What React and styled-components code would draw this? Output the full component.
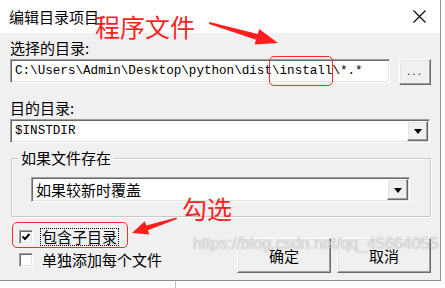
import React from 'react';
import styled, { createGlobalStyle, css } from 'styled-components';

const GlobalStyle = createGlobalStyle`
  html, body {
    margin: 0;
    background: #ffffff;
  }
  body {
    font-family: "Noto Sans CJK SC", "Noto Sans", sans-serif;
    color: #000;
  }
`;

const sunken = css`
  border: 1px solid;
  border-color: #a0a0a0 #ffffff #ffffff #a0a0a0;
  box-shadow: inset 1px 1px #696969, inset -1px -1px #e3e3e3;
`;

const raised = css`
  border: 1px solid;
  border-color: #ffffff #696969 #696969 #ffffff;
  box-shadow: inset -1px -1px #a0a0a0, inset 1px 1px #e3e3e3;
  background: #f0f0f0;
`;

const Stage = styled.div`
  position: relative;
  width: 445px;
  height: 288px;
  overflow: hidden;
  background: #ffffff;
`;

const Window = styled.div`
  width: 441px;
  height: 281px;
  box-sizing: border-box;
  border-right: 1px solid #8f8f8f;
  border-bottom: 1px solid #8f8f8f;
  display: flex;
  flex-direction: column;
`;

const TitleBar = styled.div`
  height: 33px;
  flex: none;
  background: #ffffff;
  display: flex;
  align-items: center;
  justify-content: space-between;
  padding: 0 14px 0 9px;
  font-size: 15px;
`;

const Body = styled.div`
  flex: 1;
  background: #f0f0f0;
  padding: 6px 9px 0 10px;
  font-size: 15px;
`;

const Label = styled.div`
  height: 18px;
  line-height: 18px;
  margin-top: ${p => p.$top || 0}px;
`;

const PathRow = styled.div`
  display: flex;
  align-items: flex-start;
  gap: 9px;
  margin-top: 2px;
`;

const TextBox = styled.div`
  ${sunken};
  box-sizing: border-box;
  width: ${p => p.$w}px;
  height: 24px;
  background: #ffffff;
  display: flex;
  align-items: center;
  padding-left: 4px;
  font-family: "Liberation Mono", "DejaVu Sans Mono", monospace;
  font-size: 12.6px;
  white-space: nowrap;
`;

const BrowseButton = styled.div`
  ${raised};
  box-sizing: border-box;
  width: 32px;
  height: 26px;
  display: flex;
  align-items: center;
  justify-content: center;
  font-family: "Liberation Sans", sans-serif;
  font-size: 12px;
  letter-spacing: 2px;
  color: #333;
  padding-bottom: 2px;
`;

const Combo = styled.div`
  ${sunken};
  box-sizing: border-box;
  width: ${p => p.$w}px;
  height: ${p => p.$h || 24}px;
  margin: ${p => p.$margin || '2px 0 0 0'};
  background: #ffffff;
  display: flex;
  align-items: stretch;
  padding: 1px;
`;

const ComboText = styled.div`
  flex: 1;
  display: flex;
  align-items: center;
  padding-left: 3px;
  white-space: nowrap;
  font-family: ${p => (p.$mono ? '"Liberation Mono", monospace' : '"Noto Sans CJK SC", sans-serif')};
  font-size: ${p => (p.$mono ? '12.6px' : '15px')};
`;

const DropButton = styled.div`
  ${raised};
  box-sizing: border-box;
  width: 21px;
  display: flex;
  align-items: center;
  justify-content: center;
`;

const Arrow = styled.div`
  width: 0;
  height: 0;
  border-left: 4px solid transparent;
  border-right: 4px solid transparent;
  border-top: 5px solid #000;
  margin-top: 1px;
`;

const Group = styled.fieldset`
  box-sizing: border-box;
  width: 420px;
  margin: 7px 0 0 1px;
  padding: 0 0 14px 0;
  border: 1px solid #c9c9c9;
  box-shadow: inset 1px 1px #ffffff, 1px 1px #ffffff;
  min-width: 0;
`;

const Legend = styled.legend`
  margin-left: 6px;
  padding: 0 3px;
  line-height: 16px;
  font-size: 15px;
`;

const BottomRow = styled.div`
  display: flex;
  justify-content: space-between;
  align-items: flex-start;
  margin-top: 8px;
`;

const Checks = styled.div`
  display: flex;
  flex-direction: column;
`;

const CheckRow = styled.div`
  height: 23px;
  display: flex;
  align-items: center;
  gap: 8px;
  padding-left: 9px;
`;

const CheckBox = styled.div`
  ${sunken};
  box-sizing: border-box;
  width: 14px;
  height: 14px;
  background: #ffffff;
  display: flex;
  align-items: center;
  justify-content: center;
`;

const CheckText = styled.span`
  line-height: 16px;
  padding: 0 1px;
  margin-left: -1px;
  border: 1px ${p => (p.$focus ? 'dotted #000' : 'solid transparent')};
`;

const Buttons = styled.div`
  display: flex;
  gap: 6px;
  margin-top: 13px;
`;

const PushButton = styled.div`
  ${raised};
  box-sizing: border-box;
  width: 94px;
  height: 35px;
  display: flex;
  align-items: center;
  justify-content: center;
  font-size: 15px;
`;

const Footer = styled.div`
  height: 7px;
  position: relative;
  border-right: 1px solid #c0c0c0;
  width: 175px;
`;

/* annotations drawn on top of the screenshot */
const Note = styled.div`
  position: absolute;
  left: ${p => p.$x}px;
  top: ${p => p.$y}px;
  color: #ff1f1f;
  font-size: 25px;
  line-height: 25px;
  font-family: "Noto Sans CJK SC", sans-serif;
  white-space: nowrap;
`;

const Mark = styled.div`
  position: absolute;
  left: ${p => p.$x}px;
  top: ${p => p.$y}px;
  width: ${p => p.$w}px;
  height: ${p => p.$h}px;
  box-sizing: border-box;
  border: 1.5px solid #ff2a2a;
  border-radius: 5px;
`;

const Overlay = styled.svg`
  position: absolute;
  left: 0;
  top: 0;
  pointer-events: none;
`;

const Watermark = styled.div`
  position: absolute;
  left: 193px;
  top: 235px;
  font-family: "Liberation Sans", sans-serif;
  font-size: 16px;
  color: rgba(255, 255, 255, 0.75);
  text-shadow: 0 0 1px rgba(0, 0, 0, 0.45);
  white-space: nowrap;
`;

const Check = () => (
  <svg width="10" height="10" viewBox="0 0 10 10">
    <path d="M1.5 4.5 L4 7 L8.5 2" fill="none" stroke="#000" strokeWidth="2" />
  </svg>
);

const Close = () => (
  <svg width="13" height="13" viewBox="0 0 13 13">
    <path d="M0.5 0.5 L12.5 12.5 M12.5 0.5 L0.5 12.5" stroke="#000" strokeWidth="1.1" />
  </svg>
);

export default function App() {
  return (
    <Stage>
      <GlobalStyle />
      <Window>
        <TitleBar>
          <span>编辑目录项目</span>
          <Close />
        </TitleBar>
        <Body>
          <Label>选择的目录:</Label>
          <PathRow>
            <TextBox $w={381}>C:\Users\Admin\Desktop\python\dist\install\*.*</TextBox>
            <BrowseButton>...</BrowseButton>
          </PathRow>

          <Label $top={14}>目的目录:</Label>
          <Combo $w={420}>
            <ComboText $mono>$INSTDIR</ComboText>
            <DropButton><Arrow /></DropButton>
          </Combo>

          <Group>
            <Legend>如果文件存在</Legend>
            <Combo $w={379} $h={25} $margin="11px 0 0 19px">
              <ComboText>如果较新时覆盖</ComboText>
              <DropButton><Arrow /></DropButton>
            </Combo>
          </Group>

          <BottomRow>
            <Checks>
              <CheckRow>
                <CheckBox><Check /></CheckBox>
                <CheckText $focus>包含子目录</CheckText>
              </CheckRow>
              <CheckRow>
                <CheckBox />
                <CheckText>单独添加每个文件</CheckText>
              </CheckRow>
            </Checks>
            <Buttons>
              <PushButton>确定</PushButton>
              <PushButton>取消</PushButton>
            </Buttons>
          </BottomRow>
        </Body>
      </Window>
      <Footer />

      <Watermark>https://blog.csdn.net/qq_45664055</Watermark>

      <Note $x={95} $y={14}>程序文件</Note>
      <Note $x={182} $y={196}>勾选</Note>
      <Mark $x={269} $y={56} $w={64} $h={30} />
      <Mark $x={12} $y={222} $w={116} $h={26} />
      <Overlay width="445" height="288" viewBox="0 0 445 288">
        <polygon
          fill="#ff1f1f"
          points="209.5,22 257.8,33.9 259.2,29.1 278,43 254.6,44.5 256,39.7 209,24"
        />
        <polygon
          fill="#ff1f1f"
          points="176.5,217.5 146.3,225.4 144.8,221.2 132,233 149.4,234.4 147.9,230.2 177,219"
        />
      </Overlay>
    </Stage>
  );
}
